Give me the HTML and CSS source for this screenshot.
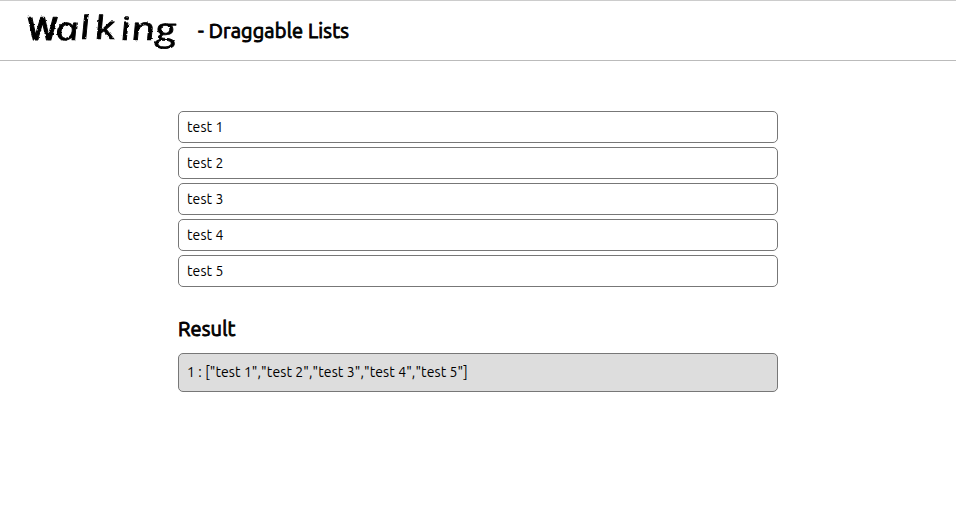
FILE: index.html
```
<!DOCTYPE html>
<html lang="en">
<head>
<meta charset="utf-8">
<title>Draggable Lists</title>
<link rel="stylesheet" href="styles.css">
</head>
<body>
<header class="header">
  <svg class="logo" width="156" height="50" viewBox="0 0 156 50" role="img" aria-label="Walking">
    <defs>
      <filter id="chalk" x="-5%" y="-10%" width="110%" height="120%">
        <feTurbulence type="fractalNoise" baseFrequency="0.3" numOctaves="2" seed="4" result="noise"/>
        <feDisplacementMap in="SourceGraphic" in2="noise" scale="2.5" xChannelSelector="R" yChannelSelector="G"/>
      </filter>
    </defs>
    <g filter="url(#chalk)" transform="translate(4 34)"><text class="logo-text logo-cap" transform="scale(1.06 1) skewX(10)" x="-1" y="0">W</text><text class="logo-text" transform="scale(1.3 1) skewX(8)" x="20.5 39.5 51 70.5 79 97" y="0 -1 -1 0 0 1">alking</text></g>
  </svg>
  <h1 class="title">- Draggable Lists</h1>
</header>
<main class="content">
  <ul class="list">
    <li class="item" draggable="true"><span>test 1</span></li>
    <li class="item" draggable="true"><span>test 2</span></li>
    <li class="item" draggable="true"><span>test 3</span></li>
    <li class="item" draggable="true"><span>test 4</span></li>
    <li class="item" draggable="true"><span>test 5</span></li>
  </ul>
  <h2 class="result-title">Result</h2>
  <div class="result"><span>1 : ["test 1","test 2","test 3","test 4","test 5"]</span></div>
</main>
</body>
</html>
```
FILE: styles.css
```
* { box-sizing: border-box; }
body {
  margin: 0;
  background: #fff;
  color: #000;
  font: 14px/20px Ubuntu, "Noto Sans", sans-serif;
}
.header {
  display: flex;
  align-items: center;
  height: 61px;
  padding-left: 26px;
  border-top: 1px solid #ccc;
  border-bottom: 1px solid #bbb;
}
.logo { display: block; overflow: visible; }
.logo-text {
  font: italic 400 32px "Open Sans", sans-serif;
  stroke: #000;
  stroke-width: 0.7px;
  stroke-linejoin: round;
}
.logo-cap { font-weight: 600; stroke-width: 1px; }
.title, .result-title {
  font-size: 20px;
  font-weight: 400;
  line-height: 24px;
  letter-spacing: 0.15px;
  -webkit-text-stroke: 0.9px #000;
}
.title { margin: 0 0 0 16px; }
.content { width: 600px; margin: 50px auto 0; }
.list {
  display: grid;
  gap: 4px;
  margin: 0;
  padding: 0;
  list-style: none;
}
.item, .result {
  display: flex;
  align-items: center;
  height: 32px;
  padding: 0 8px;
  border: 1px solid #777;
  border-radius: 5px;
  letter-spacing: 0.1px;
}
.result-title { margin: 30px 0 12px; }
.result { height: 39px; padding-bottom: 1px; background: #ddd; }
```
